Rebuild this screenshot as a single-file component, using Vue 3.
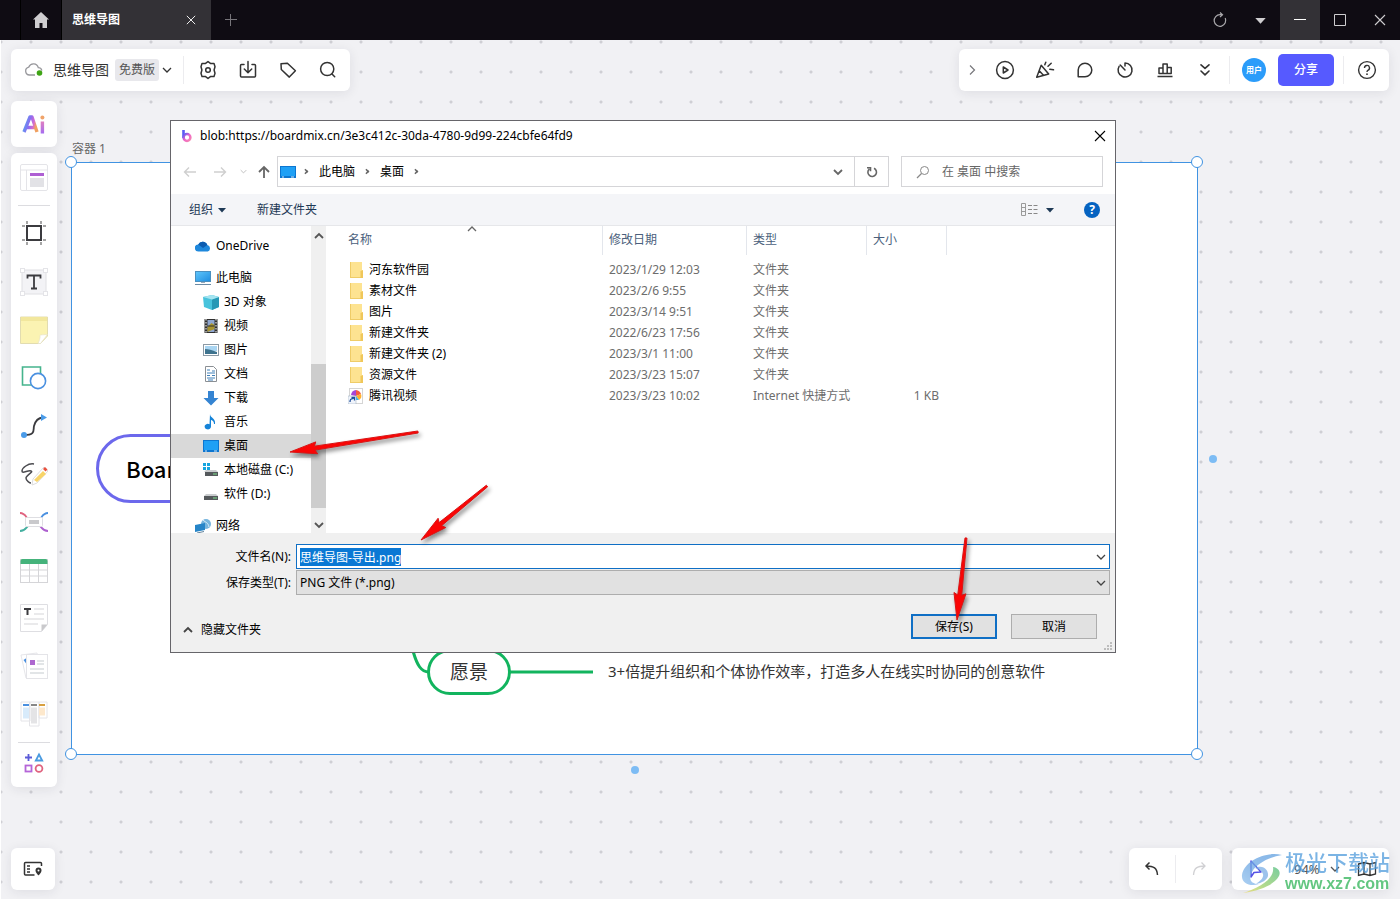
<script setup>
import { onMounted, ref } from 'vue'

const fileName = ref('思维导图-导出.png')
const nameBox = ref(null)
onMounted(() => {
  nameBox.value.focus()
  nameBox.value.select()
})

const leftTools = [
  { id: 'gear', label: '设置' },
  { id: 'download', label: '导出' },
  { id: 'tag', label: '标签' },
  { id: 'search', label: '搜索' }
]
const rightTools = [
  { id: 'play', label: '演示' },
  { id: 'party', label: '庆祝' },
  { id: 'comment', label: '评论' },
  { id: 'timer', label: '计时' },
  { id: 'vote', label: '投票' },
  { id: 'more', label: '更多' }
]
const sideTools = [
  { id: 's-frame', label: '画框' },
  { id: 's-text', label: '文本' },
  { id: 's-note', label: '便签' },
  { id: 's-shape', label: '形状' },
  { id: 's-line', label: '连线' },
  { id: 's-pen', label: '画笔' },
  { id: 's-mind', label: '思维导图' },
  { id: 's-table', label: '表格' },
  { id: 's-doc', label: '文档' },
  { id: 's-card', label: '卡片' },
  { id: 's-kanban', label: '看板' }
]
const tree = [
  { id: 't-cloud', text: 'OneDrive', gap: true },
  { id: 't-pc', text: '此电脑' },
  { id: 't-3d', text: '3D 对象', sub: true },
  { id: 't-video', text: '视频', sub: true },
  { id: 't-pic', text: '图片', sub: true },
  { id: 't-doc', text: '文档', sub: true },
  { id: 't-down', text: '下载', sub: true },
  { id: 't-music', text: '音乐', sub: true },
  { id: 't-desk', text: '桌面', sub: true, on: true },
  { id: 't-disk-c', text: '本地磁盘 (C:)', sub: true },
  { id: 't-disk', text: '软件 (D:)', sub: true, gap: true },
  { id: 't-net', text: '网络' }
]
const files = [
  ['河东软件园', '2023/1/29 12:03', '文件夹', ''],
  ['素材文件', '2023/2/6 9:55', '文件夹', ''],
  ['图片', '2023/3/14 9:51', '文件夹', ''],
  ['新建文件夹', '2022/6/23 17:56', '文件夹', ''],
  ['新建文件夹 (2)', '2023/3/1 11:00', '文件夹', ''],
  ['资源文件', '2023/3/23 15:07', '文件夹', ''],
  ['腾讯视频', '2023/3/23 10:02', 'Internet 快捷方式', '1 KB']
]

function arrow(x1, y1, x2, y2) {
  const len = Math.hypot(x2 - x1, y2 - y1)
  const ux = (x2 - x1) / len
  const uy = (y2 - y1) / len
  const at = (d, s) => `${x2 - ux * d - uy * s},${y2 - uy * d + ux * s}`
  return [at(0, 0), at(27, 6), at(25, 2), at(len, 1), at(len, -1), at(25, -2), at(27, -6)].join(' ')
}
const arrows = [arrow(418, 432, 290, 452), arrow(487, 486, 421, 540), arrow(966, 538, 957, 620)]
</script>

<template>
  <div class="app">
    <svg class="defs" aria-hidden="true">
      <defs>
        <linearGradient id="gAi" x1="0" y1="0" x2="1" y2="0.3">
          <stop offset="0" stop-color="#4aa8f2" /><stop offset="0.5" stop-color="#8d6cf0" /><stop offset="0.8" stop-color="#d66ad0" /><stop offset="1" stop-color="#f0a060" />
        </linearGradient>
        <linearGradient id="gStem" x1="0" y1="0" x2="0" y2="1">
          <stop offset="0" stop-color="#e07fc0" /><stop offset="1" stop-color="#a56cf0" />
        </linearGradient>
        <linearGradient id="gB" x1="0" y1="0" x2="1" y2="1">
          <stop offset="0" stop-color="#5b5bf5" /><stop offset="0.5" stop-color="#f065c8" /><stop offset="1" stop-color="#f58ab0" />
        </linearGradient>
        <linearGradient id="gBlue" x1="0" y1="0" x2="1" y2="1">
          <stop offset="0" stop-color="#5fc6fb" /><stop offset="1" stop-color="#1f8de0" />
        </linearGradient>
        <linearGradient id="gSwirl" x1="1" y1="0" x2="0" y2="1">
          <stop offset="0" stop-color="#5f9fe0" /><stop offset="0.6" stop-color="#6fa9e4" /><stop offset="1" stop-color="#8fc0ee" />
        </linearGradient>
        <linearGradient id="gSwirl2" x1="1" y1="0" x2="0" y2="1">
          <stop offset="0" stop-color="#4dbd7e" /><stop offset="0.6" stop-color="#9ccf68" /><stop offset="1" stop-color="#f3dd60" />
        </linearGradient>
      </defs>

      <symbol id="gear" viewBox="0 0 20 20"><path d="M10 1.500l2.400 1.900h3.600l1 3.400-.9 3.200.9 3.200-1 3.400h-3.600L10 18.500l-2.400-1.900H4l-1-3.400.9-3.200L3 6.800l1-3.400h3.600z" fill="none" stroke="#333" stroke-width="1.500" stroke-linejoin="round" /><circle cx="10" cy="10" r="2.300" fill="none" stroke="#333" stroke-width="1.500" /></symbol>
      <symbol id="download" viewBox="0 0 20 20"><path d="M6 4.500H3.500q-1 0-1 1v10.500q0 1 1 1h13q1 0 1-1V5.500q0-1-1-1H14M10 1.500v11M6.300 9l3.700 3.700L13.700 9" fill="none" stroke="#333" stroke-width="1.500" stroke-linejoin="round" stroke-linecap="round" /></symbol>
      <symbol id="tag" viewBox="0 0 20 20"><path d="M3 3.800l6.400-.6 8 7.600-6.100 6.300L3.300 9.500z" fill="none" stroke="#333" stroke-width="1.500" stroke-linejoin="round" /></symbol>
      <symbol id="search" viewBox="0 0 20 20"><circle cx="9.200" cy="9" r="6.600" fill="none" stroke="#333" stroke-width="1.500" /><path d="M14 14l2.700 2.700" stroke="#333" stroke-width="1.500" stroke-linecap="round" /></symbol>
      <symbol id="play" viewBox="0 0 20 20"><circle cx="10" cy="10" r="8.400" fill="none" stroke="#333" stroke-width="1.500" /><path d="M8.300 7v6l4.700-3z" fill="none" stroke="#333" stroke-width="1.500" stroke-linejoin="round" /></symbol>
      <symbol id="party" viewBox="0 0 20 20"><path d="M6.200 5.300L1.700 17.300 13.700 14zM4.700 11.300l3.500 3.800M9.800 4.800l1-2.600M13 6.200l3.200-3M14.800 9.300l3.700.5" fill="none" stroke="#333" stroke-width="1.500" stroke-linejoin="round" stroke-linecap="round" /></symbol>
      <symbol id="comment" viewBox="0 0 20 20"><path d="M3.200 16.800V10a6.800 6.800 0 1 1 6.800 6.800z" fill="none" stroke="#333" stroke-width="1.500" stroke-linejoin="round" /></symbol>
      <symbol id="timer" viewBox="0 0 20 20"><path d="M10 3v3M10 3a7 7 0 1 1-5.900 3.300M10 10L5.200 5" fill="none" stroke="#333" stroke-width="1.500" stroke-linecap="round" /></symbol>
      <symbol id="vote" viewBox="0 0 20 20"><path d="M2.500 16.500h15M4 13.600V8h4v5.600zM8 13.600V4h4.200v9.600zM12.200 13.600V7.500h4v6.100z" fill="none" stroke="#333" stroke-width="1.500" stroke-linejoin="round" /></symbol>
      <symbol id="more" viewBox="0 0 20 20"><path d="M6 4.800l4 3.600 4-3.600M6 11l4 3.800 4-3.800" fill="none" stroke="#333" stroke-width="1.600" stroke-linecap="round" stroke-linejoin="round" /></symbol>

      <symbol id="s-tpl" viewBox="0 0 28 28"><rect x=".5" y=".5" width="27" height="26" rx="1.500" fill="#fff" stroke="#e4e4e8" /><path d="M1 6h26M6.500 6v20" stroke="#e4e4e8" /><rect x="10" y="9" width="14" height="3" fill="#ae5fd3" /><rect x="10" y="14" width="14" height="9" fill="#e2e2e6" /></symbol>
      <symbol id="s-frame" viewBox="0 0 28 28"><rect x="7" y="6" width="14" height="14" fill="#fff" stroke="#3b3b3f" stroke-width="2" /><path d="M7 1v3M21 1v3M7 22v3M21 22v3M2 6h3M2 20h3M23 6h3M23 20h3" stroke="#888" stroke-width="1.500" /></symbol>
      <symbol id="s-text" viewBox="0 0 28 28"><rect x="2" y="2" width="24" height="24" fill="#f3f3f6" stroke="#e0e0e4" /><g fill="#fff" stroke="#e4e4e8"><rect x=".5" y=".5" width="4" height="4" /><rect x="23.500" y=".5" width="4" height="4" /><rect x=".5" y="23.500" width="4" height="4" /><rect x="23.500" y="23.500" width="4" height="4" /></g><path d="M7.500 10.500V7.500h13v3M14 7.500v13M11 20.500h6" fill="none" stroke="#3b3b3f" stroke-width="1.800" /></symbol>
      <symbol id="s-note" viewBox="0 0 28 28"><path d="M.5 1h27v19l-7 7.500H.5z" fill="#fbf3b2" stroke="#e2dcb0" /><path d="M1 1h26v4H1z" fill="#f2e79d" /><path d="M27.500 18.500c-4 .5-7 0-7.500 1 .5 2-1 6-2 8h2.500z" fill="#fff" stroke="#e6e2c8" stroke-width=".7" /></symbol>
      <symbol id="s-shape" viewBox="0 0 28 28"><path d="M2.500 3h18v18h-18z" fill="#fff" stroke="#45b48d" stroke-width="1.600" /><circle cx="18" cy="17" r="7.600" fill="#fff" stroke="#4a90e0" stroke-width="1.600" /></symbol>
      <symbol id="s-line" viewBox="0 0 28 28"><path d="M4 23c12 0 9-5 10-9s3-8 9-8.500" fill="none" stroke="#3b3b3f" stroke-width="1.800" /><circle cx="4" cy="23" r="3" fill="#4a9be8" /><path d="M21 2l6 3.500-6 3.500z" fill="#4a9be8" /></symbol>
      <symbol id="s-pen" viewBox="0 0 28 28"><path d="M14 4C8 3 2 8 2 11s6-1 9 0-5 4-5 7 4 5 5 5" fill="none" stroke="#4b4b50" stroke-width="1.500" /><path d="M12 25l1-6L24 7l4 4-11 12z" fill="#fff" stroke="#ddd" /><path d="M14 20L23 11l3 3-9 8z" fill="#f8d468" /><path d="M23 9l2-2 2.500 2.500-2 2z" fill="#e8503e" /></symbol>
      <symbol id="s-mind" viewBox="0 0 28 28"><g fill="none" stroke-width="1.800"><path d="M0 5c5 0 6 4 8 6" stroke="#e0637f" /><path d="M28 5c-5 0-6 4-8 6" stroke="#4a90e0" /><path d="M0 23c5 0 6-3 8-5" stroke="#45b0a0" /><path d="M28 23c-5 0-6-3-8-5" stroke="#ad60cf" /></g><rect x="5.500" y="9.500" width="17" height="9" rx="1" fill="#fff" stroke="#dedee2" /><rect x="9" y="12" width="10" height="4" fill="#c9c9cc" /></symbol>
      <symbol id="s-table" viewBox="0 0 28 28"><rect x=".5" y="3.500" width="27" height="23" fill="#fff" stroke="#d5d5d8" /><path d="M9.500 7v19M18.500 7v19M1 14h26M1 20h26" stroke="#d5d5d8" /><path d="M.5 8V5Q.5 3 2.500 3h23q2 0 2 2v3z" fill="#45b37b" /></symbol>
      <symbol id="s-doc" viewBox="0 0 28 28"><path d="M.5.500h27v20l-6 7H.5z" fill="#fff" stroke="#dedee2" /><path d="M4 5h7M7.500 5v6" stroke="#3b3b3f" stroke-width="2" /><path d="M14 5h10M14 10h10M4 15h20M4 20h14" stroke="#d5d5d8" /><path d="M27.500 20.500h-6v7z" fill="#c9c9cc" /></symbol>
      <symbol id="s-card" viewBox="0 0 28 28"><path d="M1 3l16-2 4 22-15 3z" fill="#fff" stroke="#e6e6ea" /><path d="M3.500 8l3-2v6z" fill="#4a90e0" /><rect x="6.500" y="2.500" width="21" height="24" fill="#fff" stroke="#e4e4e8" /><rect x="10" y="8" width="5" height="5" fill="#ad68cf" /><path d="M17 9h7M17 12h7M10 17h14M10 21h14" stroke="#c5cbd0" stroke-width="1.200" /></symbol>
      <symbol id="s-kanban" viewBox="0 0 28 28"><g fill="#fff" stroke="#e4e4e8"><path d="M1 2h9v19H1zM19 2h8v16h-8zM9.500 2h9.500v24H9.500z" /></g><path d="M3 5h6" stroke="#4a90e0" stroke-width="2" /><path d="M11 5h6" stroke="#888" stroke-width="2" /><path d="M19 5h6" stroke="#d8a040" stroke-width="2" /><path d="M3 7.500h6v11H3z" fill="#d8ebfb" /><path d="M11 7.500h6v16h-6z" fill="#e4e4e6" /><path d="M19 7.500h6v8h-6z" fill="#fde8cc" /></symbol>
      <symbol id="s-more" viewBox="0 0 28 28"><g fill="none" stroke-width="1.800"><path d="M5 8.500h7M8.500 5v7" stroke="#5b5bd8" /><path d="M19 5.500l3.200 6h-6.400z" stroke="#4a9be0" /><rect x="5.500" y="16.500" width="6" height="6" stroke="#b565d8" /><circle cx="19" cy="19.500" r="3.400" stroke="#e0637f" /></g></symbol>

      <symbol id="t-cloud" viewBox="0 0 16 16"><path d="M3.500 13.500a3.500 3.500 0 0 1-.3-7A5 5 0 0 1 12.300 7 3.400 3.400 0 0 1 12.800 13.500z" fill="#1e88dc" /><path d="M3.200 6.500A5 5 0 0 1 12.300 7L8 10z" fill="#0c5cb0" /></symbol>
      <symbol id="t-pc" viewBox="0 0 16 16"><rect x=".5" y="1.500" width="15" height="10" fill="url(#gBlue)" stroke="#4a90c0" /><path d="M0 14.500h16" stroke="#6c8ba5" /><path d="M6 12h4v1H6z" fill="#9ab" /></symbol>
      <symbol id="t-3d" viewBox="0 0 16 16"><path d="M0 3l9-2 7 2v10l-7 3-8-3z" fill="#48c3dc" /><path d="M9 5.500l7-2.500v10l-7 3z" fill="#2798b5" /><path d="M0 3l9-2 7 2-7 2.500z" fill="#a5e4f0" /></symbol>
      <symbol id="t-video" viewBox="0 0 16 16"><path d="M1.500 1h13v14h-13z" fill="#303030" /><path d="M4.500 2h7v12h-7z" fill="#8fa6cf" /><path d="M4.500 9l4-4 3 2v4l-7 3z" fill="#a8932e" /><path d="M3 1v14M13 1v14" stroke="#fff" stroke-dasharray="1.500 1.500" /><path d="M4.500 8h7" stroke="#303030" /></symbol>
      <symbol id="t-pic" viewBox="0 0 16 16"><rect x=".5" y="2.500" width="15" height="11" fill="#fff" stroke="#8c9aa5" /><path d="M2 4h12v5H2z" fill="#a9d5f2" /><path d="M2 7c3 0 7 1 12 3v2H2z" fill="#3e738e" /></symbol>
      <symbol id="t-doc" viewBox="0 0 16 16"><path d="M2.500.500h8l3 3v12h-11z" fill="#fff" stroke="#8a8f94" /><path d="M4 4h3M4 7h8M4 9.500h3M9 9.500h3M4 12h8M9 5h3M5 14h5" stroke="#4080b8" /></symbol>
      <symbol id="t-down" viewBox="0 0 16 16"><path d="M5 1h6v7h4.500L8 15.500.5 8H5z" fill="#3584d2" /></symbol>
      <symbol id="t-music" viewBox="0 0 16 16"><path d="M7 0c0 4 6 4 5 10h-1c0-3-2-4-3-4v6.500a3.200 2.800 0 1 1-1.500-2.300z" fill="#1583d8" /></symbol>
      <symbol id="t-desk" viewBox="0 0 16 16"><path d="M0 2h16v12H0z" fill="#0d76d0" /><path d="M1 3h14v9H1z" fill="#1fa0f5" /><path d="M2 13h2M11 13h3" stroke="#cfe8fb" /></symbol>
      <symbol id="t-disk" viewBox="0 0 16 16"><path d="M3 8h10l2 2H1z" fill="#c9ccce" /><path d="M1 10h14v4H1z" fill="#55595c" /><path d="M10 12h4" stroke="#7de08a" /></symbol>
      <symbol id="t-disk-c" viewBox="0 0 16 16"><path d="M3 8h10l2 2H1z" fill="#c9ccce" /><path d="M2 10h13v4H2z" fill="#55595c" /><path d="M10 12h4" stroke="#7de08a" /><path d="M0 1h3v3H0zM4 1h3v3H4zM0 5h3v3H0zM4 5h3v3H4z" fill="#16a5df" /></symbol>
      <symbol id="t-net" viewBox="0 0 16 16"><circle cx="11" cy="6" r="5" fill="#76b5de" /><path d="M8 2c3 3 5 2 6 7" stroke="#d8eef9" fill="none" /><path d="M0 7l10-2v7l-10 2z" fill="#2685c8" /><path d="M2 15l7-1.500" stroke="#64829a" /></symbol>
      <symbol id="f-folder" viewBox="0 0 16 16"><path d="M2 0h12v8l1 1v7H2z" fill="#fde391" /><path d="M2 0h1v16H2zM2 15h13v1H2z" fill="#efcc67" /><path d="M12.500 9l2.500-1v8h-2.500z" fill="#f0c75a" /></symbol>
      <symbol id="f-link" viewBox="0 0 16 16"><rect x="1.500" y=".5" width="13" height="15" fill="#fff" stroke="#d5d5d5" /><path d="M8 8V2a6 6 0 0 0-5 5z" fill="#a545d8" /><path d="M8 8V2a6 6 0 0 1 5 4z" fill="#f55a43" /><path d="M8 8l5-2a5 5 0 0 1-2 6z" fill="#ffb02e" /><path d="M8 8l3 4H8z" fill="#36b5f0" /><rect x="0" y="8" width="8" height="8" fill="#f0f4fb" stroke="#9ab" stroke-width=".5" /><path d="M2 14c0-3 1-3 4-4M3.500 9.500H6.500v3" stroke="#1f4f9c" stroke-width="1.300" fill="none" /></symbol>
      <symbol id="chev" viewBox="0 0 10 10"><path d="M1 3l4 4 4-4" fill="none" stroke="currentColor" stroke-width="1.300" /></symbol>
      <symbol id="chev-b" viewBox="0 0 10 10"><path d="M1 3l4 4 4-4" fill="none" stroke="currentColor" stroke-width="1.800" /></symbol>
      <symbol id="tri" viewBox="0 0 10 10"><path d="M1 3h8L5 7.500z" fill="currentColor" /></symbol>
      <symbol id="x" viewBox="0 0 12 12"><path d="M1 1l10 10M11 1L1 11" stroke="currentColor" stroke-width="1.100" /></symbol>
    </svg>

    <header class="titlebar">
      <button class="home" aria-label="主页"><svg width="18" height="18" viewBox="0 0 18 18"><path d="M9 1l8 7.500h-2V17h-4.500v-5h-3v5H3V8.500H1z" fill="#cfced0" /></svg></button>
      <div class="tab"><span>思维导图</span><button aria-label="关闭标签"><svg width="10" height="10"><use href="#x" /></svg></button></div>
      <button class="win" aria-label="新建标签"><svg width="12" height="12" viewBox="0 0 12 12"><path d="M5.500 0v12M0 5.500h12" stroke="#77757a" /></svg></button>
      <div class="grow"></div>
      <button class="win" aria-label="刷新"><svg width="16" height="16" viewBox="0 0 16 16"><path d="M13.200 6a5.800 5.800 0 1 1-5-3.300H10M8 .5l2.500 2.200L8 5" fill="none" stroke="#a9a8ab" stroke-width="1.200" /></svg></button>
      <button class="win" aria-label="菜单"><svg width="13" height="13"><use href="#tri" /></svg></button>
      <button class="win on" aria-label="最小化"><svg width="12" height="12" viewBox="0 0 12 12"><path d="M0 5.500h12" stroke="#fff" /></svg></button>
      <button class="win" aria-label="最大化"><svg width="12" height="12" viewBox="0 0 12 12"><path d="M.5.500h11v11H.5z" fill="none" stroke="#cfced0" /></svg></button>
      <button class="win" aria-label="关闭"><svg width="12" height="12"><use href="#x" /></svg></button>
    </header>

    <main class="canvas">
      <div class="frame-label">容器 1</div>
      <section class="frame">
        <div class="root-node">Boardmix</div>
        <svg class="branch" width="182" height="30" viewBox="0 0 182 30"><path d="M1 3c4 14 8 21 16 21M97 24h84" fill="none" stroke="#12b45e" stroke-width="3" /></svg>
        <div class="child-node">愿景</div>
        <div class="leaf">3+倍提升组织和个体协作效率，打造多人在线实时协同的创意软件</div>
        <i class="handle tl"></i><i class="handle tr"></i><i class="handle bl"></i><i class="handle br"></i>
        <i class="dot right"></i><i class="dot bottom"></i>
      </section>

      <nav class="panel bar-left">
        <svg width="20" height="16" viewBox="0 0 20 16"><path d="M11 13H5.500a4 4 0 0 1-.7-7.900 5 5 0 0 1 9.500.6 3.500 3.500 0 0 1 3.500 3" fill="none" stroke="#98989c" stroke-width="1.300" /><circle cx="15.500" cy="11" r="2.800" fill="#3fa415" /></svg>
        <span class="name">思维导图</span><span class="badge">免费版</span>
        <button class="small" aria-label="展开"><svg width="10" height="10"><use href="#chev" /></svg></button>
        <i class="vline"></i>
        <button v-for="t in leftTools" :key="t.id" class="tool" :aria-label="t.label"><svg width="20" height="20"><use :href="'#' + t.id" /></svg></button>
      </nav>

      <nav class="panel bar-right">
        <button class="fold" aria-label="收起"><svg width="10" height="12" viewBox="0 0 10 12"><path d="M3 1.500L7.500 6 3 10.500" fill="none" stroke="#77777b" stroke-width="1.200" /></svg></button>
        <button v-for="t in rightTools" :key="t.id" class="tool" :aria-label="t.label"><svg width="20" height="20"><use :href="'#' + t.id" /></svg></button>
        <i class="vline"></i>
        <span class="avatar">用户</span>
        <button class="share">分享</button>
        <i class="vline"></i>
        <button class="help-tool" aria-label="帮助"><svg width="20" height="20" viewBox="0 0 20 20"><circle cx="10" cy="10" r="8.400" fill="none" stroke="#333" stroke-width="1.400" /><path d="M7.500 8a2.500 2.500 0 1 1 3.300 2.300q-.8.400-.8 1.700" fill="none" stroke="#333" stroke-width="1.400" /><circle cx="10" cy="14.200" r=".9" fill="#333" /></svg></button>
      </nav>

      <button class="panel ai" aria-label="AI"><svg width="26" height="22" viewBox="0 0 26 22"><path d="M3 19L9 4h2L16 19M5.500 14.500h8" fill="none" stroke="url(#gAi)" stroke-width="3.400" stroke-linejoin="round" /><path d="M19.700 8.500h3.400V20.500h-3.400z" fill="url(#gStem)" /><circle cx="21.400" cy="4.500" r="2" fill="#f0a36a" /></svg></button>

      <nav class="panel side">
        <button aria-label="模板"><svg width="28" height="28"><use href="#s-tpl" /></svg></button>
        <hr>
        <button v-for="t in sideTools" :key="t.id" :aria-label="t.label"><svg width="28" height="28"><use :href="'#' + t.id" /></svg></button>
        <hr>
        <button class="last" aria-label="更多工具"><svg width="28" height="28"><use href="#s-more" /></svg></button>
      </nav>

      <button class="panel minimap" aria-label="导航"><svg width="20" height="18" viewBox="0 0 20 18"><path d="M11.500 15H2.500q-1 0-1-1V3.500q0-1 1-1h15q1 0 1 1V6" fill="none" stroke="#333" stroke-width="1.500" /><path d="M4 6h3M4 9h3M4 12h3" stroke="#333" stroke-width="1.500" /><path d="M15.500 7.500a3 3 0 0 1 3 3c0 2-3 5-3 5s-3-3-3-5a3 3 0 0 1 3-3z" fill="#333" /><circle cx="15.500" cy="10.500" r="1" fill="#fff" /></svg></button>

      <div class="panel history">
        <button aria-label="撤销"><svg width="16" height="16" viewBox="0 0 16 16"><path d="M5.500 1.500L2 5l3.500 3.500M2 5c8 0 11 2 11.500 9" fill="none" stroke="#333" stroke-width="1.500" /></svg></button>
        <i class="vline"></i>
        <button aria-label="重做"><svg width="16" height="16" viewBox="0 0 16 16"><path d="M10.500 1.500L14 5l-3.500 3.500M14 5c-8 0-11 2-11.500 9" fill="none" stroke="#d0d0d3" stroke-width="1.300" /></svg></button>
      </div>
      <div class="panel zoom">
        <svg width="16" height="20" viewBox="0 0 16 20"><path d="M3 2v16l3-4.500 7-.5z" fill="none" stroke="#5552e5" stroke-width="1.500" stroke-linejoin="round" /></svg>
        <span class="pct">94%</span>
        <svg width="10" height="10"><use href="#chev" /></svg>
        <svg class="map" width="20" height="16" viewBox="0 0 20 16"><path d="M1.500 3l5.500-1.500 6 1.500 5.500-1.500V13L13 14.500 7 13l-5.500 1.500zM7 1.500V13M13 3v11.500" fill="none" stroke="#333" stroke-width="1.300" /></svg>
      </div>
      <div class="mark" aria-hidden="true">
        <svg width="44" height="44" viewBox="0 0 44 44"><path d="M43 4C26 0 5 10 3 24c-1 8 8 12 17 9C12 33 9 28 13 21 18 12 31 6 43 4z" fill="url(#gSwirl)" /><path d="M16 17c8-4 14 2 13 8-1 4-6 7-12 8 4-3 8-6 7-10-1-3-4-5-8-6z" fill="#7db0e6" /><path d="M34 16c13 2 9 20-30 26 16-5 32-14 30-26z" fill="url(#gSwirl2)" /></svg>
        <div class="mark-text"><b>极光下载站</b><span>www.xz7.com</span></div>
      </div>

      <section class="dialog" role="dialog" aria-label="另存为">
        <div class="d-title">
          <svg width="12" height="14" viewBox="0 0 12 14"><path d="M2.500 1v8" stroke="#5b5bf5" stroke-width="2.600" /><circle cx="6" cy="8.500" r="3.400" fill="none" stroke="url(#gB)" stroke-width="2.500" /></svg>
          <span>blob:https://boardmix.cn/3e3c412c-30da-4780-9d99-224cbfe64fd9</span>
          <button aria-label="关闭对话框"><svg width="12" height="12"><use href="#x" /></svg></button>
        </div>
        <div class="d-nav">
          <button class="n-back" aria-label="后退"><svg width="14" height="12" viewBox="0 0 14 12"><path d="M13 6H1.500M6 1.500L1.500 6 6 10.500" fill="none" stroke="#cfcfcf" stroke-width="1.400" /></svg></button>
          <button class="n-fwd" aria-label="前进"><svg width="14" height="12" viewBox="0 0 14 12"><path d="M1 6h11.500M8 1.500L12.500 6 8 10.500" fill="none" stroke="#cfcfcf" stroke-width="1.400" /></svg></button>
          <button class="n-rec" aria-label="最近位置"><svg width="7" height="7"><use href="#chev" /></svg></button>
          <button class="n-up" aria-label="上一级"><svg width="12" height="14" viewBox="0 0 12 14"><path d="M6 13V2M1 7l5-5 5 5" fill="none" stroke="#666" stroke-width="1.800" /></svg></button>
          <div class="address">
            <svg width="16" height="16"><use href="#t-desk" /></svg>
            <i class="gt"></i><span>此电脑</span><i class="gt"></i><span>桌面</span><i class="gt"></i>
            <button class="drop" aria-label="历史地址"><svg width="10" height="10"><use href="#chev-b" /></svg></button>
            <button class="reload" aria-label="刷新桌面"><svg width="12" height="12" viewBox="0 0 12 12"><path d="M8 2.300A4.300 4.300 0 1 1 3.300 3M1 1.700h3.500v3.500" fill="none" stroke="#666" stroke-width="1.600" /></svg></button>
          </div>
          <label class="d-search"><svg width="14" height="14" viewBox="0 0 14 14"><circle cx="8.500" cy="5.500" r="4" fill="none" stroke="#888" /><path d="M5.500 8.500L1 13" stroke="#888" stroke-width="1.200" /></svg><input type="text" placeholder="在 桌面 中搜索" aria-label="搜索桌面"></label>
        </div>
        <div class="d-tools">
          <button>组织<svg width="10" height="10"><use href="#tri" /></svg></button>
          <button>新建文件夹</button>
          <div class="grow"></div>
          <button class="view" aria-label="视图"><svg width="17" height="13" viewBox="0 0 17 13"><path d="M.5.500h4v12h-4zM.5 4.500h4M.5 8.500h4" fill="none" stroke="#9a9a9a" /><path d="M7 2.500h4M12.500 2.500h4M7 6.500h4M12.500 6.500h4M7 10.500h4M12.500 10.500h4" stroke="#888" /></svg></button>
          <button class="view-more" aria-label="更多选项"><svg width="10" height="10"><use href="#tri" /></svg></button>
          <button class="q" aria-label="获取帮助">?</button>
        </div>
        <div class="d-body">
          <ul class="tree">
            <li v-for="n in tree" :key="n.text" :class="{ sub: n.sub, on: n.on, gap: n.gap }"><svg width="16" height="16"><use :href="'#' + n.id" /></svg>{{ n.text }}</li>
          </ul>
          <div class="scroll"><svg class="up" width="10" height="10"><use href="#chev-b" /></svg><i></i><svg width="10" height="10"><use href="#chev-b" /></svg></div>
          <div class="list">
            <svg class="sort" width="10" height="10"><use href="#chev" /></svg>
            <table>
              <colgroup><col class="c1"><col class="c2"><col class="c3"><col class="c4"><col></colgroup>
              <thead><tr><th>名称</th><th>修改日期</th><th>类型</th><th>大小</th><td></td></tr></thead>
              <tbody>
                <tr v-for="(f, i) in files" :key="f[0]">
                  <td><span class="fname"><svg width="16" height="16"><use :href="i < 6 ? '#f-folder' : '#f-link'" /></svg>{{ f[0] }}</span></td>
                  <td>{{ f[1] }}</td><td>{{ f[2] }}</td><td>{{ f[3] }}</td><td></td>
                </tr>
              </tbody>
            </table>
          </div>
        </div>
        <form class="d-form" @submit.prevent>
          <label for="fn">文件名(N):</label>
          <div class="combo"><input id="fn" ref="nameBox" v-model="fileName" type="text" spellcheck="false"><svg width="10" height="10"><use href="#chev" /></svg></div>
          <label for="ft">保存类型(T):</label>
          <div class="combo"><select id="ft"><option>PNG 文件 (*.png)</option></select><svg width="10" height="10"><use href="#chev" /></svg></div>
        </form>
        <div class="d-foot">
          <button class="hide"><svg width="10" height="10"><use href="#chev-b" /></svg>隐藏文件夹</button>
          <div class="grow"></div>
          <button class="btn main">保存(S)</button>
          <button class="btn">取消</button>
        </div>
        <svg class="grip" width="8" height="8" viewBox="0 0 8 8"><path d="M6 0h2v2H6zM3 3h2v2H3zM6 3h2v2H6zM0 6h2v2H0zM3 6h2v2H3zM6 6h2v2H6z" fill="#bdbdbd" /></svg>
        <svg class="arrows" width="944" height="531" viewBox="171 121 944 531"><polygon v-for="a in arrows" :key="a" :points="a" fill="#fa0505" stroke="#d81414" stroke-width="1" stroke-linejoin="round" /></svg>
      </section>
    </main>
  </div>
</template>

<style>
body { margin: 0; }
</style>

<style scoped>
* { box-sizing: border-box; }
.app { min-height: 100vh; display: flex; flex-direction: column; font: 12px/16px "Noto Sans", "Noto Sans CJK SC", sans-serif; color: #000; }
.defs { position: absolute; width: 0; height: 0; }
svg { flex: none; display: block; }
button { font: inherit; color: inherit; background: none; border: 0; padding: 0; display: flex; align-items: center; justify-content: center; }
.grow { flex: 1; }

.titlebar { height: 40px; background: #0f0c13; display: flex; padding-left: 20px; color: #cfced0; }
.home { width: 42px; border-left: 1px solid #000; border-right: 1px solid #000; }
.tab { width: 149px; background: #333136; display: flex; align-items: center; justify-content: space-between; padding: 0 12px 0 10px; font-weight: 700; color: #fff; }
.tab button { width: 16px; height: 16px; }
.win { width: 40px; }
.win.on { background: #333136; }

.canvas { position: relative; flex: 1; overflow: hidden; background: #f1f1f4 radial-gradient(circle, #cfcfd4 1px, transparent 2px) 15px 17px / 30px 30px; border-left: 1px solid #fff; border-bottom: 1px solid #fff; }
.panel { position: absolute; background: #fff; border-radius: 6px; box-shadow: 0 2px 12px rgba(30, 30, 50, 0.09); display: flex; align-items: center; }
.vline { width: 1px; height: 28px; background: #ececef; }
.tool { width: 40px; height: 40px; }

.bar-left { left: 10px; top: 9px; height: 42px; padding: 0 2px 0 13px; color: #333; }
.name { font-size: 14px; margin-left: 9px; }
.badge { margin-left: 6px; padding: 3px 4px; border-radius: 3px; background: #e8e8ec; color: #555; }
.small { width: 16px; height: 20px; margin-right: 8px; }
.bar-left .vline { margin-right: 4px; }
.bar-right { right: 11px; top: 9px; height: 42px; }
.fold { width: 26px; height: 40px; }
.bar-right .vline { margin-left: 4px; }
.avatar { width: 24px; height: 24px; margin-left: 12px; border-radius: 50%; background: #2b9cfa; color: #fff; font-size: 8px; font-weight: 700; line-height: 24px; text-align: center; }
.share { width: 56px; height: 32px; margin: 0 5px 0 12px; border-radius: 5px; background: #565aff; color: #fff; font-weight: 500; }
.help-tool { width: 45px; height: 40px; }

.ai { left: 10px; top: 61px; width: 46px; height: 46px; }
.side { left: 10px; top: 113px; width: 46px; flex-direction: column; padding: 1px 0 4px; }
.side button { width: 46px; height: 48px; }
.side .last { height: 40px; }
.side hr { width: 32px; height: 1px; border: 0; background: #dcdce0; margin: 3px 0 4px; }
.side hr:last-of-type { margin: 4px 0 0; }
.minimap { left: 10px; bottom: 9px; width: 44px; height: 42px; }
.history { right: 178px; bottom: 9px; height: 42px; }
.history button { width: 46px; height: 42px; }
.zoom { right: 11px; bottom: 9px; width: 157px; height: 42px; padding: 0 12px 0 16px; color: #555; }
.pct { margin: 0 10px 0 30px; font-size: 13px; }
.zoom .map { margin-left: auto; }
.mark { position: absolute; right: 10px; bottom: 4px; display: flex; gap: 2px; opacity: 0.75; pointer-events: none; }
.mark-text { display: flex; flex-direction: column; color: #4f9bdc; }
.mark-text b { font-size: 21px; line-height: 22px; font-weight: 500; }
.mark-text span { font: 700 16px/22px "Liberation Sans", sans-serif; color: #2fb457; }

.frame-label { position: absolute; left: 71px; top: 101px; color: #666; }
.frame { position: absolute; left: 70px; right: 202px; top: 122px; bottom: 144px; background: #fff; border: 1px solid #4093e2; }
.handle { position: absolute; width: 12px; height: 12px; border: 1px solid #4093e2; border-radius: 50%; background: #fff; }
.tl { left: -7px; top: -7px; }
.tr { right: -6px; top: -7px; }
.bl { left: -7px; bottom: -6px; }
.br { right: -6px; bottom: -6px; }
.dot { position: absolute; width: 8px; height: 8px; border-radius: 50%; background: #7dbcf4; }
.dot.right { right: -20px; top: 50%; transform: translateY(-50%); }
.dot.bottom { left: 50%; bottom: -20px; transform: translateX(-50%); }
.root-node { position: absolute; left: 24px; top: 271px; width: 200px; height: 69px; border: 3px solid #6c68ec; border-radius: 35px; padding-left: 27px; font: 500 22px/62px "Noto Sans CJK SC", sans-serif; }
.branch { position: absolute; left: 340px; top: 485px; }
.child-node { position: absolute; left: 355px; top: 486px; width: 84px; height: 46px; border: 3px solid #12b45e; border-radius: 23px; background: #fff; font-size: 19px; line-height: 40px; text-align: center; color: #333; }
.leaf { position: absolute; left: 536px; top: 497px; font-size: 15px; line-height: 22px; color: #333; white-space: nowrap; }

.dialog { position: absolute; left: 169px; right: 284px; top: 80px; background: #fff; border: 1px solid #66656a; }
.d-title { display: flex; align-items: center; height: 29px; padding: 0 9px 0 10px; }
.d-title span { flex: 1; margin-left: 7px; }
.d-nav { display: flex; align-items: center; margin: 6px 12px 7px 12px; height: 31px; }
.n-back { width: 14px; margin-right: 16px; }
.n-fwd { width: 14px; margin-right: 13px; }
.n-rec { width: 7px; color: #bbb; margin-right: 11px; }
.n-up { width: 12px; margin-right: 7px; }
.address { flex: 1; align-self: stretch; display: flex; align-items: center; border: 1px solid #d5d5d8; padding-left: 2px; }
.gt { width: 5px; height: 5px; border-top: 2px solid #666; border-right: 2px solid #666; transform: rotate(45deg) scale(0.8); margin: 0 11px 0 7px; }
.address span + .gt { margin-left: 9px; }
.drop { width: 32px; margin-left: auto; color: #666; }
.reload { width: 34px; align-self: stretch; border-left: 1px solid #d5d5d8; }
.d-search { width: 202px; align-self: stretch; margin-left: 12px; border: 1px solid #d5d5d8; display: flex; align-items: center; padding-left: 14px; }
.d-search input { flex: 1; min-width: 0; border: 0; outline: 0; padding: 0; margin-left: 12px; font: inherit; }
.d-search input::placeholder { color: #666; opacity: 1; }
.d-tools { display: flex; align-items: center; height: 32px; padding: 0 15px 0 18px; background: #f4f5f8; border-bottom: 1px solid #e6e7ea; color: #1e3956; }
.d-tools button:first-child { gap: 4px; margin-right: 30px; }
.view { margin-right: 7px; }
.view-more { margin-right: 29px; }
.q { width: 16px; height: 16px; border-radius: 50%; background: #0563c1; color: #fff; font-weight: 700; }
.d-body { display: flex; height: 307px; overflow: hidden; }
.tree { width: 140px; margin: 0; padding: 8px 0 0; list-style: none; }
.tree li { display: flex; align-items: center; gap: 5px; height: 24px; padding-left: 24px; white-space: nowrap; }
.tree .sub { padding-left: 32px; }
.tree .on { background: #d9d9d9; }
.tree .gap { margin-bottom: 8px; }
.scroll { width: 15px; background: #f0f0f0; color: #555; display: flex; flex-direction: column; align-items: center; padding: 5px 0 3px; }
.scroll i { width: 15px; height: 144px; margin: auto 0 12px; background: #cdcdcd; }
.up { transform: rotate(180deg); }
.list { position: relative; flex: 1; }
.sort { position: absolute; left: 141px; top: -2px; transform: rotate(180deg); color: #666; }
table { width: 100%; table-layout: fixed; border-collapse: separate; border-spacing: 0; }
.c1 { width: 277px; }
.c2 { width: 144px; }
.c3 { width: 120px; }
.c4 { width: 80px; }
th { height: 29px; padding: 0 0 2px 6px; border-right: 1px solid #e3e6ec; text-align: left; font-weight: 400; color: #4b5f7c; }
th:first-child { padding-left: 22px; }
tbody::before { content: ""; display: block; height: 4px; }
tbody td { height: 21px; padding: 0 0 0 6px; color: #6d6d6d; white-space: nowrap; }
tbody td:first-child { padding-left: 22px; }
tbody td:nth-child(4) { text-align: right; padding-right: 8px; }
.fname { display: flex; align-items: center; gap: 5px; color: #000; }
.d-form { display: grid; grid-template-columns: 120px 1fr; gap: 1px 5px; align-items: center; padding: 11px 5px 0 0; background: #f0f0f0; }
.d-form label { text-align: right; }
.combo { position: relative; }
.combo svg { position: absolute; right: 4px; top: 8px; color: #444; pointer-events: none; }
.combo input, .combo select { display: block; width: 100%; height: 25px; padding: 0 20px 0 3px; border: 1px solid #0f6fc5; border-radius: 0; background: #fff; font: inherit; color: #000; outline: 0; appearance: none; caret-color: transparent; }
.combo select { background: #e1e1e1; border-color: #adadad; }
.combo input::selection { background: #0a78d4; color: #fff; }
.d-foot { display: flex; align-items: center; padding: 19px 18px 13px 12px; gap: 14px; background: #f0f0f0; }
.hide { gap: 8px; margin-top: 6px; }
.hide svg { transform: rotate(180deg); color: #444; }
.btn { width: 86px; height: 25px; border: 1px solid #adadad; background: #e1e1e1; }
.btn.main { border: 2px solid #0f6fc5; }
.grip { position: absolute; right: 3px; bottom: 2px; }
.arrows { position: absolute; left: 0; top: 0; pointer-events: none; filter: drop-shadow(2px 3px 2px rgba(0, 0, 0, 0.45)); }
</style>
